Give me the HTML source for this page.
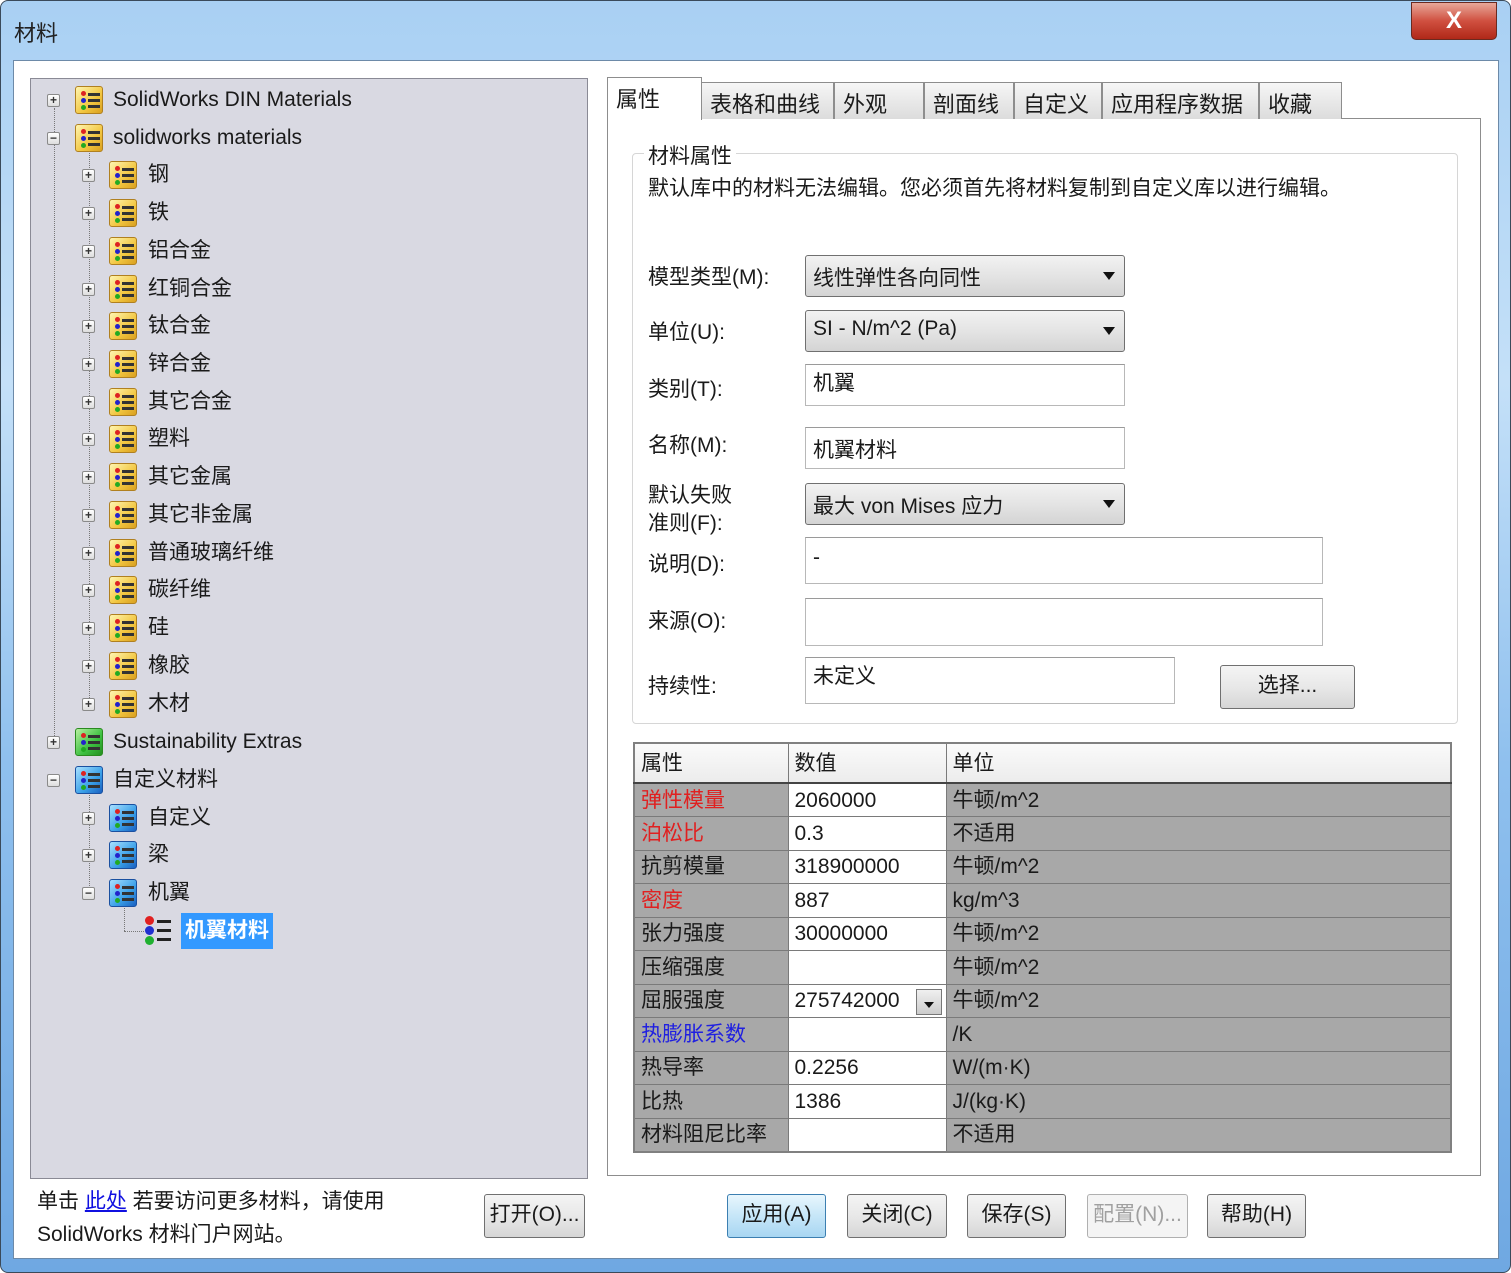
<!DOCTYPE html>
<html><head><meta charset="utf-8">
<style>
*{box-sizing:border-box;margin:0;padding:0}
body{width:1511px;height:1273px;overflow:hidden;background:#fff;font-family:"Liberation Sans","Noto Sans CJK SC",sans-serif;font-size:21px;color:#1a1a1a;position:relative}
.abs{position:absolute}
#frame{left:0;top:0;width:1511px;height:1273px;border:1px solid #3a4a5a;border-radius:8px;background:linear-gradient(180deg,#a9d0f3 0%,#c4e0f8 30%,#8fc0ee 60%,#6fa8e2 100%)}
#client{left:13px;top:60px;width:1486px;height:1199px;background:#fff;border:1px solid #6d8aa8}
#tree{left:30px;top:78px;width:558px;height:1101px;background:#d9d9e2;border:1px solid #8a8a95}
.row{position:absolute;height:30px;line-height:30px;white-space:nowrap}
.exp{position:absolute;width:13px;height:13px;border:1px solid #8a8a8a;background:linear-gradient(#fff,#ddd);border-radius:2px;font-size:12px;line-height:10px;text-align:center;color:#333;font-weight:bold}
.ico{position:absolute;width:28px;height:28px;border-radius:3px;border:1px solid #b08020;background:linear-gradient(135deg,#fff5b0,#f2c640 60%,#d9a020)}
.ico.g{border-color:#2a8a20;background:linear-gradient(135deg,#b8f0a0,#3cc040 60%,#249020)}
.ico.b{border-color:#1a50a0;background:linear-gradient(135deg,#a8e0ff,#3aa0e8 60%,#1a60c0)}
.ico i{position:absolute;left:5px;width:5px;height:5px;border-radius:50%}
.ico b{position:absolute;left:12px;width:12px;height:3px;background:#333}
.lbl{position:absolute}
.tab{position:absolute;top:82px;height:37px;border:1px solid #8d8d8d;border-bottom:none;background:linear-gradient(#f6f6f6,#dcdcdc);padding:4px 8px;font-size:22px}
.field{position:absolute;left:805px;border:1px solid #b8b8b8;border-top-color:#9a9a9a;background:#fff;padding:2px 7px;font-size:21px}
.combo{position:absolute;left:805px;width:320px;height:42px;border:1px solid #707070;border-radius:3px;background:linear-gradient(#f2f2f2,#e4e4e4 50%,#d4d4d4);padding:6px 7px;font-size:21px}
.combo:after{content:"";position:absolute;right:9px;top:16px;border-left:6px solid transparent;border-right:6px solid transparent;border-top:8px solid #111}
.flab{position:absolute;left:648px;font-size:21px}
.btn{position:absolute;height:44px;border:1px solid #707070;border-radius:3px;background:linear-gradient(#f4f4f4,#e8e8e8 50%,#d6d6d6);text-align:center;line-height:40px;font-size:21px}
table{position:absolute;left:633px;top:742px;width:819px;border-collapse:collapse;border:2px solid #808080}
td{height:33.5px;border:1px solid #7a7a7a;padding:0 6px;font-size:21px;line-height:31px;background:#a8a8a8;white-space:nowrap}
td.v{background:#fff}
tr.h td{background:linear-gradient(#fafafa,#ececec);height:40px;border-bottom:2px solid #444}
.r{color:#e02020}.bl{color:#2020e0}
</style></head><body>
<div id="frame" class="abs"></div>
<div class="abs" style="left:14px;top:16px;font-size:22px;color:#222">材料</div>
<div class="abs" style="left:1411px;top:2px;width:86px;height:38px;border:1px solid #6a2a20;border-radius:0 0 5px 5px;background:linear-gradient(#e8a89a,#d05040 50%,#b02818);color:#fff;text-align:center;font:bold 24px/36px 'Liberation Sans',sans-serif">X</div>
<div id="client" class="abs"></div>
<div id="tree" class="abs"></div>

<!-- tree dotted lines -->
<div class="abs" style="left:54px;top:108px;height:640px;border-left:1px dotted #777"></div>
<div class="abs" style="left:89px;top:150px;height:560px;border-left:1px dotted #777"></div>
<div class="abs" style="left:89px;top:792px;height:100px;border-left:1px dotted #777"></div>
<div class="abs" style="left:124px;top:905px;height:26px;border-left:1px dotted #777"></div>
<div class="abs" style="left:124px;top:931px;width:20px;border-top:1px dotted #777"></div>

<div id="rows"></div>
<!-- level 0 rows -->
<div class="exp" style="left:47px;top:94px">+</div><div class="ico" style="left:75px;top:86px"><i style="top:4px;background:#d22"></i><i style="top:11px;background:#22c"></i><i style="top:18px;background:#2a2"></i><b style="top:6px"></b><b style="top:12px"></b><b style="top:18px"></b></div><div class="row" style="left:113px;top:85px">SolidWorks DIN Materials</div>
<div class="exp" style="left:47px;top:132px">−</div><div class="ico" style="left:75px;top:124px"><i style="top:4px;background:#d22"></i><i style="top:11px;background:#22c"></i><i style="top:18px;background:#2a2"></i><b style="top:6px"></b><b style="top:12px"></b><b style="top:18px"></b></div><div class="row" style="left:113px;top:123px">solidworks materials</div>

<!-- level1 yellow -->
<div style="position:absolute;left:0;top:0">
</div>
<div class="exp" style="left:82px;top:169px">+</div><div class="ico" style="left:109px;top:161px"><i style="top:4px;background:#d22"></i><i style="top:11px;background:#22c"></i><i style="top:18px;background:#2a2"></i><b style="top:6px"></b><b style="top:12px"></b><b style="top:18px"></b></div><div class="row" style="left:148px;top:160px">钢</div>
<div class="exp" style="left:82px;top:207px">+</div><div class="ico" style="left:109px;top:199px"><i style="top:4px;background:#d22"></i><i style="top:11px;background:#22c"></i><i style="top:18px;background:#2a2"></i><b style="top:6px"></b><b style="top:12px"></b><b style="top:18px"></b></div><div class="row" style="left:148px;top:198px">铁</div>
<div class="exp" style="left:82px;top:245px">+</div><div class="ico" style="left:109px;top:237px"><i style="top:4px;background:#d22"></i><i style="top:11px;background:#22c"></i><i style="top:18px;background:#2a2"></i><b style="top:6px"></b><b style="top:12px"></b><b style="top:18px"></b></div><div class="row" style="left:148px;top:236px">铝合金</div>
<div class="exp" style="left:82px;top:283px">+</div><div class="ico" style="left:109px;top:275px"><i style="top:4px;background:#d22"></i><i style="top:11px;background:#22c"></i><i style="top:18px;background:#2a2"></i><b style="top:6px"></b><b style="top:12px"></b><b style="top:18px"></b></div><div class="row" style="left:148px;top:274px">红铜合金</div>
<div class="exp" style="left:82px;top:320px">+</div><div class="ico" style="left:109px;top:312px"><i style="top:4px;background:#d22"></i><i style="top:11px;background:#22c"></i><i style="top:18px;background:#2a2"></i><b style="top:6px"></b><b style="top:12px"></b><b style="top:18px"></b></div><div class="row" style="left:148px;top:311px">钛合金</div>
<div class="exp" style="left:82px;top:358px">+</div><div class="ico" style="left:109px;top:350px"><i style="top:4px;background:#d22"></i><i style="top:11px;background:#22c"></i><i style="top:18px;background:#2a2"></i><b style="top:6px"></b><b style="top:12px"></b><b style="top:18px"></b></div><div class="row" style="left:148px;top:349px">锌合金</div>
<div class="exp" style="left:82px;top:396px">+</div><div class="ico" style="left:109px;top:388px"><i style="top:4px;background:#d22"></i><i style="top:11px;background:#22c"></i><i style="top:18px;background:#2a2"></i><b style="top:6px"></b><b style="top:12px"></b><b style="top:18px"></b></div><div class="row" style="left:148px;top:387px">其它合金</div>
<div class="exp" style="left:82px;top:433px">+</div><div class="ico" style="left:109px;top:425px"><i style="top:4px;background:#d22"></i><i style="top:11px;background:#22c"></i><i style="top:18px;background:#2a2"></i><b style="top:6px"></b><b style="top:12px"></b><b style="top:18px"></b></div><div class="row" style="left:148px;top:424px">塑料</div>
<div class="exp" style="left:82px;top:471px">+</div><div class="ico" style="left:109px;top:463px"><i style="top:4px;background:#d22"></i><i style="top:11px;background:#22c"></i><i style="top:18px;background:#2a2"></i><b style="top:6px"></b><b style="top:12px"></b><b style="top:18px"></b></div><div class="row" style="left:148px;top:462px">其它金属</div>
<div class="exp" style="left:82px;top:509px">+</div><div class="ico" style="left:109px;top:501px"><i style="top:4px;background:#d22"></i><i style="top:11px;background:#22c"></i><i style="top:18px;background:#2a2"></i><b style="top:6px"></b><b style="top:12px"></b><b style="top:18px"></b></div><div class="row" style="left:148px;top:500px">其它非金属</div>
<div class="exp" style="left:82px;top:547px">+</div><div class="ico" style="left:109px;top:539px"><i style="top:4px;background:#d22"></i><i style="top:11px;background:#22c"></i><i style="top:18px;background:#2a2"></i><b style="top:6px"></b><b style="top:12px"></b><b style="top:18px"></b></div><div class="row" style="left:148px;top:538px">普通玻璃纤维</div>
<div class="exp" style="left:82px;top:584px">+</div><div class="ico" style="left:109px;top:576px"><i style="top:4px;background:#d22"></i><i style="top:11px;background:#22c"></i><i style="top:18px;background:#2a2"></i><b style="top:6px"></b><b style="top:12px"></b><b style="top:18px"></b></div><div class="row" style="left:148px;top:575px">碳纤维</div>
<div class="exp" style="left:82px;top:622px">+</div><div class="ico" style="left:109px;top:614px"><i style="top:4px;background:#d22"></i><i style="top:11px;background:#22c"></i><i style="top:18px;background:#2a2"></i><b style="top:6px"></b><b style="top:12px"></b><b style="top:18px"></b></div><div class="row" style="left:148px;top:613px">硅</div>
<div class="exp" style="left:82px;top:660px">+</div><div class="ico" style="left:109px;top:652px"><i style="top:4px;background:#d22"></i><i style="top:11px;background:#22c"></i><i style="top:18px;background:#2a2"></i><b style="top:6px"></b><b style="top:12px"></b><b style="top:18px"></b></div><div class="row" style="left:148px;top:651px">橡胶</div>
<div class="exp" style="left:82px;top:698px">+</div><div class="ico" style="left:109px;top:690px"><i style="top:4px;background:#d22"></i><i style="top:11px;background:#22c"></i><i style="top:18px;background:#2a2"></i><b style="top:6px"></b><b style="top:12px"></b><b style="top:18px"></b></div><div class="row" style="left:148px;top:689px">木材</div>

<div class="exp" style="left:47px;top:736px">+</div><div class="ico g" style="left:75px;top:728px"><i style="top:4px;background:#d22"></i><i style="top:11px;background:#22c"></i><i style="top:18px;background:#2a2"></i><b style="top:6px"></b><b style="top:12px"></b><b style="top:18px"></b></div><div class="row" style="left:113px;top:727px">Sustainability Extras</div>
<div class="exp" style="left:47px;top:774px">−</div><div class="ico b" style="left:75px;top:766px"><i style="top:4px;background:#d22"></i><i style="top:11px;background:#22c"></i><i style="top:18px;background:#2a2"></i><b style="top:6px"></b><b style="top:12px"></b><b style="top:18px"></b></div><div class="row" style="left:113px;top:765px">自定义材料</div>
<div class="exp" style="left:82px;top:812px">+</div><div class="ico b" style="left:109px;top:804px"><i style="top:4px;background:#d22"></i><i style="top:11px;background:#22c"></i><i style="top:18px;background:#2a2"></i><b style="top:6px"></b><b style="top:12px"></b><b style="top:18px"></b></div><div class="row" style="left:148px;top:803px">自定义</div>
<div class="exp" style="left:82px;top:849px">+</div><div class="ico b" style="left:109px;top:841px"><i style="top:4px;background:#d22"></i><i style="top:11px;background:#22c"></i><i style="top:18px;background:#2a2"></i><b style="top:6px"></b><b style="top:12px"></b><b style="top:18px"></b></div><div class="row" style="left:148px;top:840px">梁</div>
<div class="exp" style="left:82px;top:887px">−</div><div class="ico b" style="left:109px;top:879px"><i style="top:4px;background:#d22"></i><i style="top:11px;background:#22c"></i><i style="top:18px;background:#2a2"></i><b style="top:6px"></b><b style="top:12px"></b><b style="top:18px"></b></div><div class="row" style="left:148px;top:878px">机翼</div>
<div class="abs" style="left:144px;top:916px;width:30px;height:30px">
<i class="abs" style="left:1px;top:0;width:9px;height:9px;border-radius:50%;background:#e02020"></i><i class="abs" style="left:1px;top:10px;width:9px;height:9px;border-radius:50%;background:#2030d0"></i><i class="abs" style="left:1px;top:20px;width:9px;height:9px;border-radius:50%;background:#20b030"></i>
<b class="abs" style="left:13px;top:4px;width:14px;height:3px;background:#222"></b><b class="abs" style="left:13px;top:13px;width:14px;height:3px;background:#222"></b><b class="abs" style="left:13px;top:22px;width:14px;height:3px;background:#222"></b></div>
<div class="row" style="left:181px;top:913px;height:36px;line-height:36px;background:#3399ff;color:#fff;padding:0 4px;font-weight:bold">机翼材料</div>

<!-- bottom left -->
<div class="abs" style="left:37px;top:1185px;font-size:21px;line-height:33px">单击 <span style="color:#1010e0;text-decoration:underline">此处</span> 若要访问更多材料，请使用<br>SolidWorks 材料门户网站。</div>
<div class="btn" style="left:484px;top:1194px;width:101px">打开(O)...</div>

<!-- right panel -->
<div class="abs" style="left:607px;top:118px;width:874px;height:1058px;border:1px solid #8d8d8d;background:#fff"></div>
<div class="tab" style="left:701px;width:133px">表格和曲线</div>
<div class="tab" style="left:834px;width:90px">外观</div>
<div class="tab" style="left:924px;width:90px">剖面线</div>
<div class="tab" style="left:1014px;width:88px">自定义</div>
<div class="tab" style="left:1102px;width:157px">应用程序数据</div>
<div class="tab" style="left:1259px;width:83px">收藏</div>
<div class="tab" style="left:607px;top:77px;height:43px;width:95px;background:#fff;border-bottom:none;font-size:22px">属性</div>

<div class="abs" style="left:632px;top:153px;width:826px;height:571px;border:1px solid #d6d6d6;border-radius:4px"></div>
<div class="abs" style="left:644px;top:140px;background:#fff;padding:0 4px;font-size:21px">材料属性</div>
<div class="abs" style="left:648px;top:172px;font-size:21px">默认库中的材料无法编辑。您必须首先将材料复制到自定义库以进行编辑。</div>

<div class="flab" style="top:261px">模型类型(M):</div><div class="combo" style="top:255px">线性弹性各向同性</div>
<div class="flab" style="top:316px">单位(U):</div><div class="combo" style="top:310px">SI - N/m^2 (Pa)</div>
<div class="flab" style="top:373px">类别(T):</div><div class="field" style="top:364px;width:320px;height:42px">机翼</div>
<div class="flab" style="top:429px">名称(M):</div><div class="field" style="top:427px;width:320px;height:42px;padding-top:6px">机翼材料</div>
<div class="flab" style="top:482px;line-height:28px">默认失败<br>准则(F):</div><div class="combo" style="top:483px">最大 von Mises 应力</div>
<div class="flab" style="top:548px">说明(D):</div><div class="field" style="top:537px;width:518px;height:47px;padding-top:8px">-</div>
<div class="flab" style="top:605px">来源(O):</div><div class="field" style="top:598px;width:518px;height:48px"></div>
<div class="flab" style="top:670px">持续性:</div><div class="field" style="top:657px;width:370px;height:47px">未定义</div>
<div class="btn" style="left:1220px;top:665px;width:135px">选择...</div>

<table>
<tr class="h"><td style="width:154px">属性</td><td style="width:158px">数值</td><td>单位</td></tr>
<tr><td class="r">弹性模量</td><td class="v">2060000</td><td>牛顿/m^2</td></tr>
<tr><td class="r">泊松比</td><td class="v">0.3</td><td>不适用</td></tr>
<tr><td>抗剪模量</td><td class="v">318900000</td><td>牛顿/m^2</td></tr>
<tr><td class="r">密度</td><td class="v">887</td><td>kg/m^3</td></tr>
<tr><td>张力强度</td><td class="v">30000000</td><td>牛顿/m^2</td></tr>
<tr><td>压缩强度</td><td class="v"></td><td>牛顿/m^2</td></tr>
<tr><td>屈服强度</td><td class="v" style="position:relative">275742000<span style="position:absolute;right:4px;top:4px;width:26px;height:26px;border:1px solid #777;background:linear-gradient(#f0f0f0,#ccc)"><span style="position:absolute;left:7px;top:12px;border-left:5px solid transparent;border-right:5px solid transparent;border-top:6px solid #111"></span></span></td><td>牛顿/m^2</td></tr>
<tr><td class="bl">热膨胀系数</td><td class="v"></td><td>/K</td></tr>
<tr><td>热导率</td><td class="v">0.2256</td><td>W/(m·K)</td></tr>
<tr><td>比热</td><td class="v">1386</td><td>J/(kg·K)</td></tr>
<tr><td>材料阻尼比率</td><td class="v"></td><td>不适用</td></tr>
</table>

<div class="btn" style="left:727px;top:1194px;width:99px;border-color:#3c7fb1;background:linear-gradient(#e8f6fd,#c6e6f8 50%,#a8d6f2)">应用(A)</div>
<div class="btn" style="left:847px;top:1194px;width:100px">关闭(C)</div>
<div class="btn" style="left:967px;top:1194px;width:99px">保存(S)</div>
<div class="btn" style="left:1087px;top:1194px;width:101px;color:#a0a0a0;border-color:#b0b0b0;background:#f4f4f4">配置(N)...</div>
<div class="btn" style="left:1207px;top:1194px;width:99px">帮助(H)</div>
</body></html>
